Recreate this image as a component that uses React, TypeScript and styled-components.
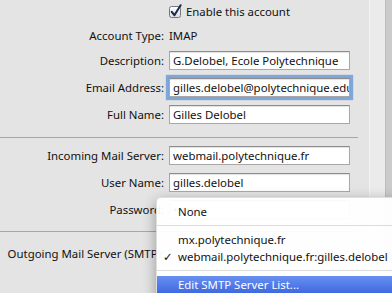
import React from "react";
import styled, { createGlobalStyle } from "styled-components";

const GlobalStyle = createGlobalStyle`
	html, body {
		margin: 0;
		padding: 0;
		background: #e4e4e4;
	}
	body {
		font-family: "Noto Sans", "DejaVu Sans", sans-serif;
		font-size: 11.4px;
		color: #111;
	}
`;

const fields = [
	{ label: "Description:", value: "G.Delobel, Ecole Polytechnique", mt: 6 },
	{ label: "Email Address:", value: "gilles.delobel@polytechnique.edu", mt: 8, focused: true },
	{ label: "Full Name:", value: "Gilles Delobel", mt: 8 },
];

const serverFields = [
	{ label: "Incoming Mail Server:", value: "webmail.polytechnique.fr", mt: 8 },
	{ label: "User Name:", value: "gilles.delobel", mt: 8 },
	{ label: "Password:", value: "••••••••", mt: 8 },
];

const App: React.FC = () => {
	return (
		<Page>
			<GlobalStyle />
			<Panel>
				<Row $mt={4} $h={15}>
					<span />
					<CheckLabel>
						<CheckBox />
						Enable this account
					</CheckLabel>
				</Row>
				<Row $mt={8} $h={18}>
					<Label>Account Type:</Label>
					<Value>IMAP</Value>
				</Row>
				{fields.map((f) => (
					<Row key={f.label} $mt={f.mt} $h={19}>
						<Label>{f.label}</Label>
						<Field $focused={f.focused}>{f.value}</Field>
					</Row>
				))}
				<Divider $mt={13} />
				{serverFields.map((f) => (
					<Row key={f.label} $mt={f.mt} $h={19}>
						<Label>{f.label}</Label>
						<Field>{f.value}</Field>
					</Row>
				))}
				<Divider $mt={12} />
				<Row $mt={12} $h={20}>
					<Label>Outgoing Mail Server (SMTP):</Label>
					<span />
				</Row>
			</Panel>
			<SideStrip />
			<WindowEdge />

			<Menu>
				<MenuItem>
					<Tick />
					None
				</MenuItem>
				<MenuSeparator />
				<MenuItem>
					<Tick />
					mx.polytechnique.fr
				</MenuItem>
				<MenuItem>
					<Tick>✓</Tick>
					webmail.polytechnique.fr:gilles.delobel
				</MenuItem>
				<MenuSeparator />
				<MenuItem $active>
					<Tick />
					Edit SMTP Server List...
				</MenuItem>
			</Menu>
		</Page>
	);
};

const CheckBox: React.FC = () => (
	<svg width="15" height="15" viewBox="0 0 15 15">
		<defs>
			<linearGradient id="cb" x1="0" y1="0" x2="0" y2="1">
				<stop offset="0" stopColor="#ffffff" />
				<stop offset="1" stopColor="#d5dde8" />
			</linearGradient>
		</defs>
		<rect x="1.5" y="2.5" width="11" height="11" rx="2" fill="url(#cb)" stroke="#6f7782" />
		<path d="M3.8 7.8 L6.4 11.2 L12.6 1.2" fill="none" stroke="#1d2744" strokeWidth="2" strokeLinecap="round" strokeLinejoin="round" />
	</svg>
);

export default App;

const Page = styled.div`
	position: relative;
	display: flex;
	width: 392px;
	height: 293px;
	overflow: hidden;
	background: #e4e4e4;
`;

const Panel = styled.div`
	width: 369px;
	flex: none;
	display: flex;
	flex-direction: column;
`;

const SideStrip = styled.div`
	width: 15px;
	flex: none;
	background: #ebebeb;
	border-left: 1px solid #f2f2f2;
`;

const WindowEdge = styled.div`
	flex: 1;
	background: #cbcbcb;
	border-left: 1px solid #bdbdbd;
`;

const Row = styled.div<{ $mt: number; $h: number }>`
	display: grid;
	grid-template-columns: 164px 181px;
	column-gap: 5px;
	align-items: center;
	margin-top: ${({ $mt }) => $mt}px;
	height: ${({ $h }) => $h}px;
`;

const Label = styled.span`
	text-align: right;
	white-space: nowrap;
	line-height: 18px;
`;

const Value = styled.span`
	line-height: 18px;
`;

const CheckLabel = styled.label`
	display: flex;
	align-items: center;
	gap: 3px;
	margin-left: -1px;
	white-space: nowrap;
	line-height: 15px;
`;

const Field = styled.div<{ $focused?: boolean }>`
	box-sizing: border-box;
	height: 19px;
	padding: 0 3px;
	line-height: 17px;
	background: #fff;
	border: 1px solid #a8a8a8;
	border-top-color: #8c8c8c;
	white-space: nowrap;
	overflow: hidden;
	box-shadow: ${({ $focused }) =>
		$focused
			? "inset 0 1px 1px rgba(0,0,0,0.12), 0 0 0 1px #7ba3d9, 0 0 1px 3px rgba(96,145,215,0.75)"
			: "inset 0 1px 1px rgba(0,0,0,0.12)"};
`;

const Divider = styled.div<{ $mt: number }>`
	width: 358px;
	height: 1px;
	background: #a7a7a7;
	margin-top: ${({ $mt }) => $mt}px;
`;

const Menu = styled.div`
	position: absolute;
	left: 156px;
	top: 197px;
	width: 260px;
	padding-top: 5px;
	padding-bottom: 20px;
	background: rgba(255, 255, 255, 0.95);
	border: 1px solid rgba(0, 0, 0, 0.12);
	border-radius: 5px 0 0 0;
	box-shadow: 0 4px 14px rgba(0, 0, 0, 0.35);
`;

const MenuItem = styled.div<{ $active?: boolean }>`
	display: flex;
	align-items: center;
	height: 17px;
	white-space: nowrap;
	color: ${({ $active }) => ($active ? "#fff" : "#111")};
	background: ${({ $active }) =>
		$active ? "linear-gradient(180deg, #6890f0 0%, #3f69e0 100%)" : "transparent"};
`;

const Tick = styled.span`
	width: 15px;
	padding-left: 6px;
	flex: none;
`;

const MenuSeparator = styled.div`
	height: 1px;
	margin: 5px 0;
	background: #dcdcdc;
`;
